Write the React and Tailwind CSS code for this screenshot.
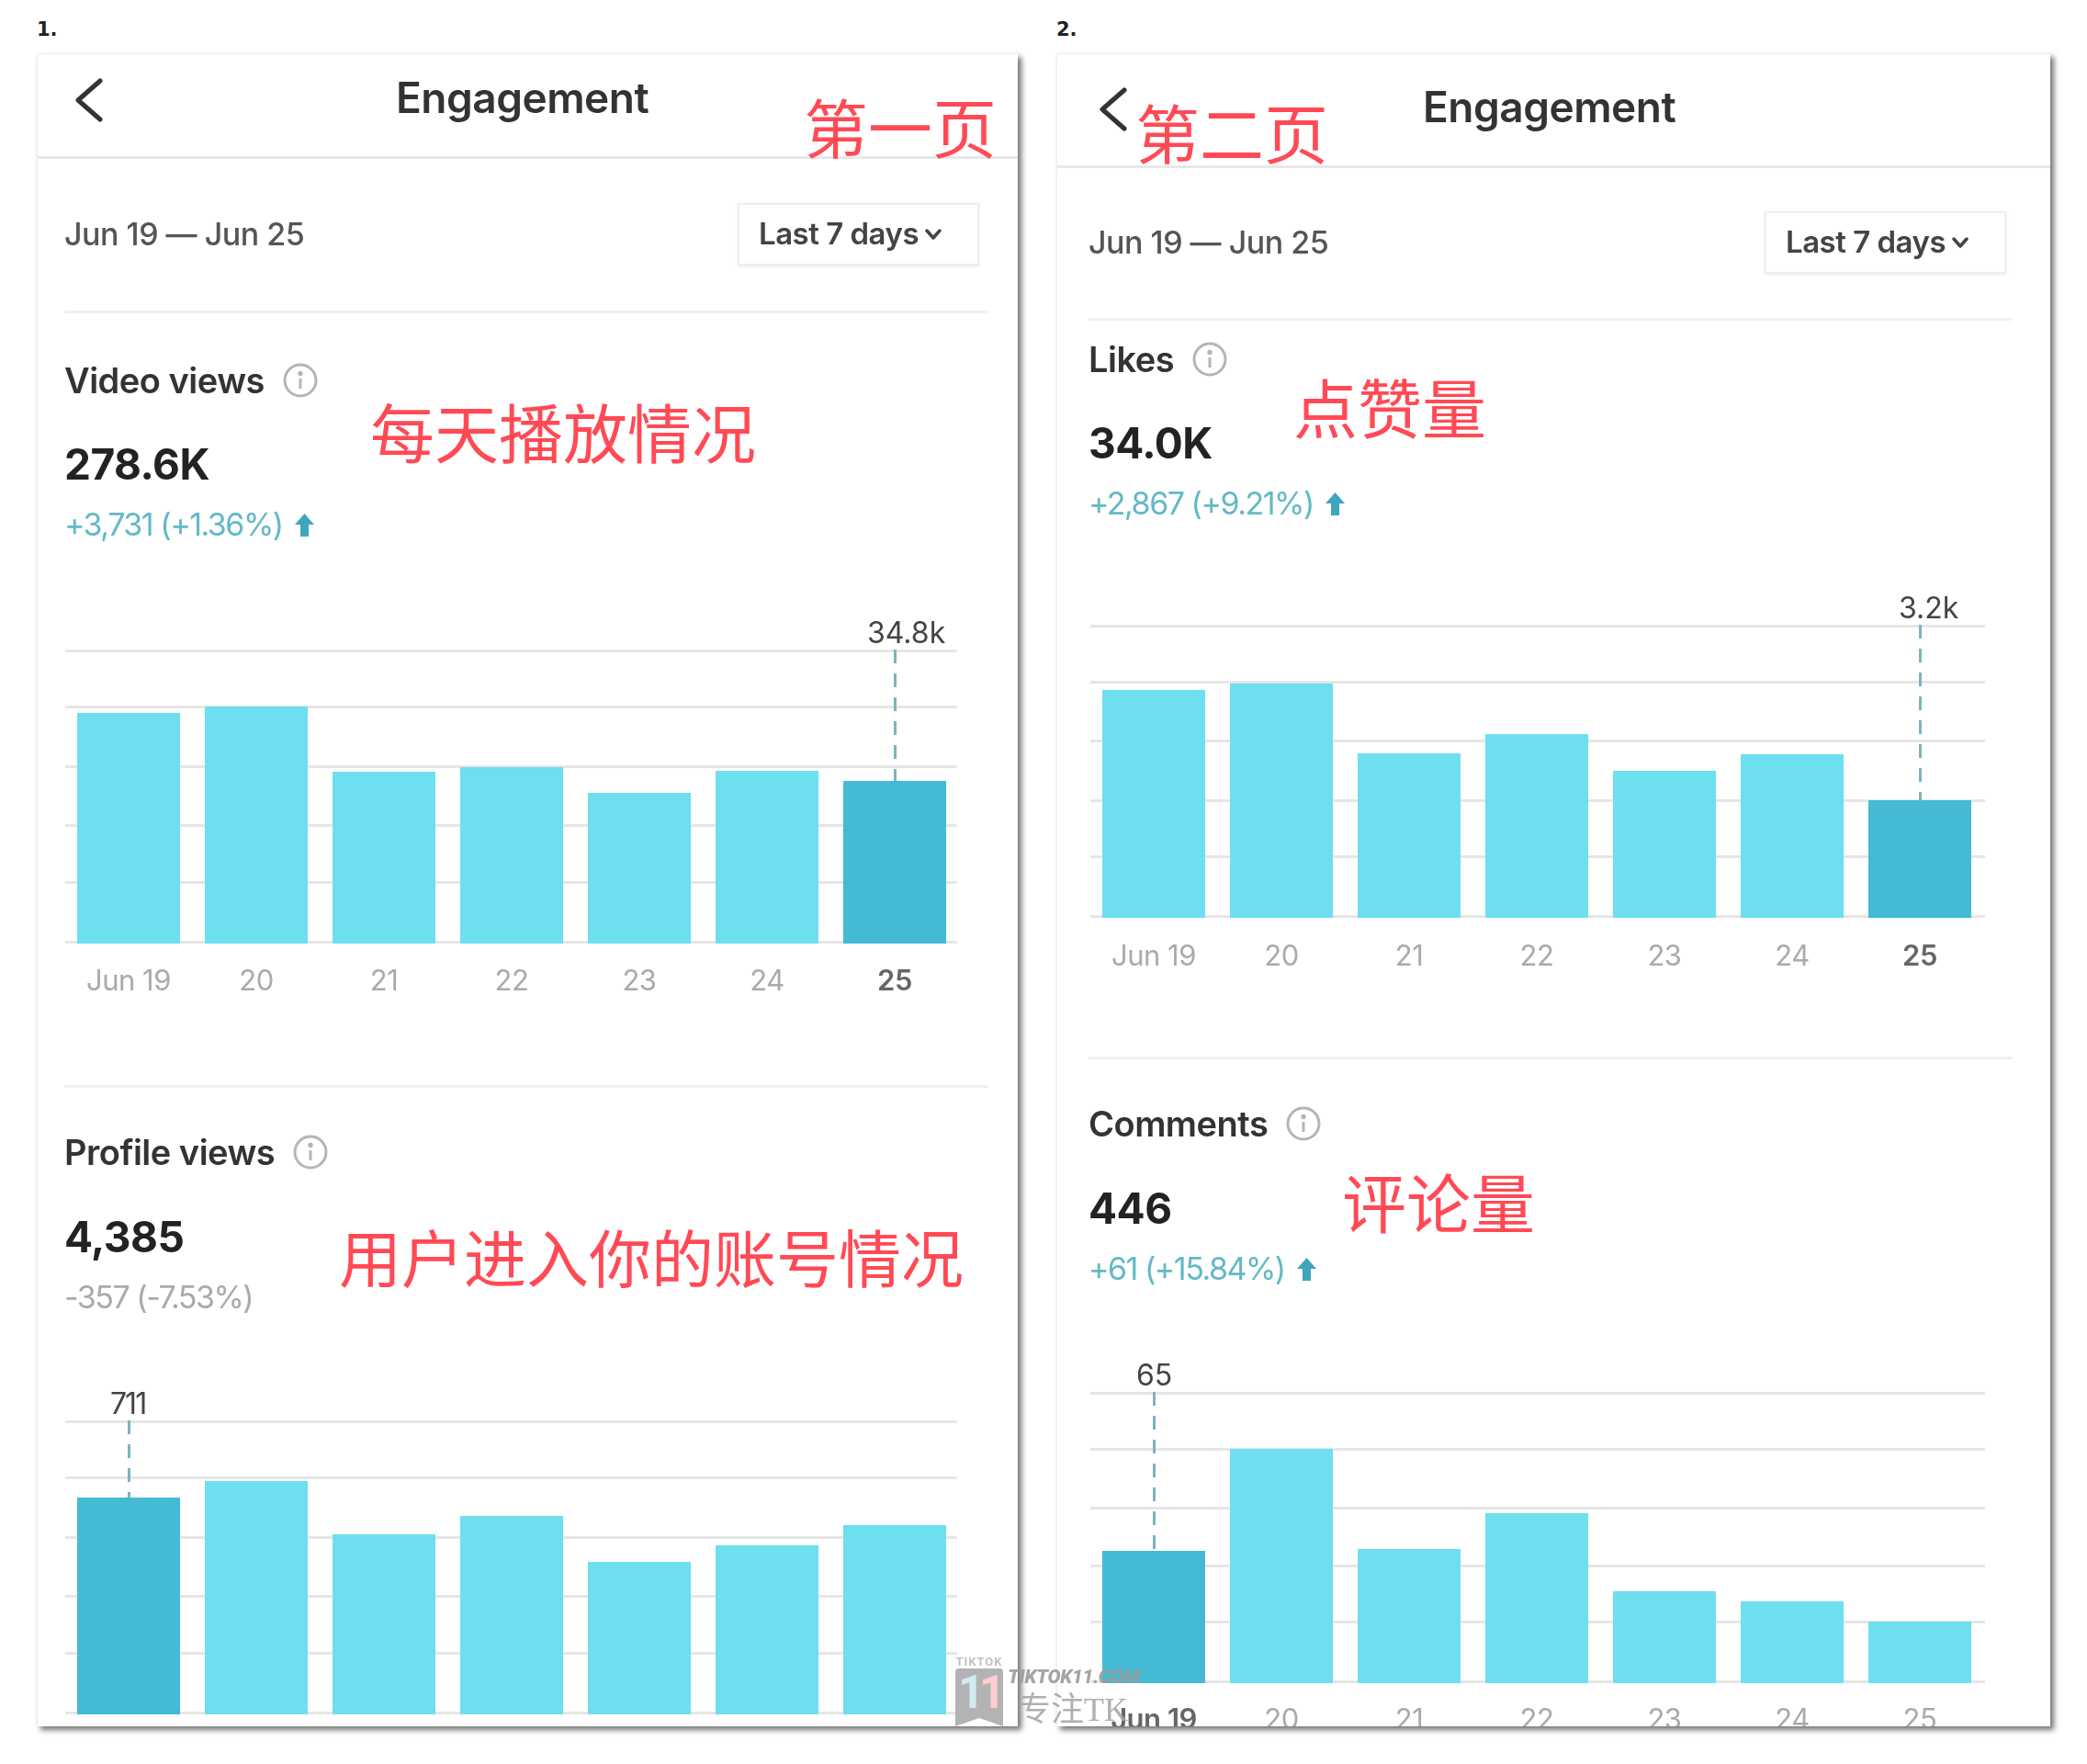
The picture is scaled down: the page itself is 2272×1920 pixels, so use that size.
import React from 'react';

const SANS = "font-['Inter',sans-serif]";
const CJK = "font-['Noto_Sans_CJK_SC',sans-serif]";
const DAYS = ['Jun 19', '20', '21', '22', '23', '24', '25'];

const BackIcon = () => (
  <svg width="34" height="48" viewBox="0 0 34 48" fill="none" stroke="#333" strokeWidth="5" strokeLinecap="round" strokeLinejoin="round">
    <path d="M29 3 L5 24 L29 45" />
  </svg>
);

const SmallChevron = () => (
  <svg width="20" height="12" viewBox="0 0 20 12" fill="none" stroke="#444" strokeWidth="3.5" strokeLinecap="round" strokeLinejoin="round">
    <path d="M3 2 L10 10 L17 2" />
  </svg>
);

const InfoIcon = () => (
  <svg width="38" height="38" viewBox="0 0 38 38" fill="none" stroke="#b5b5b5" strokeWidth="3">
    <circle cx="19" cy="19" r="17" />
    <path d="M19 17 V28" />
    <circle cx="19" cy="11.5" r="1.2" fill="#b5b5b5" />
  </svg>
);

const UpArrow = () => (
  <svg width="21" height="25" viewBox="0 0 21 25" fill="#3ea6bd">
    <path d="M10.5 0 L21 12 H15 V25 H6 V12 H0 Z" />
  </svg>
);

// one horizontal rule on the light grey side, used between sections
const Rule = ({ className }) => <div className={`h-[3px] bg-[#f0f0f0] ${className}`} />;

const Chart = ({ height, bars, active, value, labelClass, gridClass, labelGap, noLabels }) => (
  <div className={gridClass}>
    <div className="relative" style={{ height }}>
      <div className="absolute inset-0 grid grid-rows-[62fr_65fr_65fr_62fr_66fr] border-b-[3px] border-[#e6e6e6]">
        {[0, 1, 2, 3, 4].map((i) => (
          <div key={i} className="border-t-[3px] border-[#e6e6e6]" />
        ))}
      </div>
      <div className="relative flex h-full items-end gap-[27px] pl-[13px]">
        {bars.map((h, i) => (
          <div
            key={i}
            className={`relative w-[112px] ${i === active ? 'bg-[#45bad4]' : 'bg-[#6ddfef]'}`}
            style={{ height: h }}
          >
            {i === active && (
              <div
                className="absolute bottom-full left-[55px] w-[3px] bg-[repeating-linear-gradient(to_bottom,#7db3be_0_15px,transparent_15px_26px)]"
                style={{ height: height - h }}
              />
            )}
          </div>
        ))}
      </div>
      <span className={`absolute -top-[38px] text-[32px] leading-[40px] text-[#444] ${labelClass}`}>{value}</span>
    </div>
    {!noLabels && (
      <div className={`flex gap-[27px] pl-[13px] ${labelGap}`}>
        {DAYS.map((d, i) => (
          <span
            key={d}
            className={`w-[112px] whitespace-nowrap text-center text-[31px] leading-[40px] tracking-[-0.5px] ${
              i === active ? 'font-semibold text-[#666]' : 'text-[#aaa]'
            }`}
          >
            {d}
          </span>
        ))}
      </div>
    )}
  </div>
);

const Stat = ({ title, value, delta, up, className, valueGap }) => (
  <section className={className}>
    <div className="flex h-[48px] items-center gap-[20px]">
      <h2 className="text-[38px] font-semibold leading-[48px] tracking-[-0.5px] text-[#333]">{title}</h2>
      <InfoIcon />
    </div>
    <div className={`text-[46px] font-bold leading-[56px] tracking-[-0.5px] text-[#222] ${valueGap}`}>{value}</div>
    <div className="mt-[16px] flex h-[44px] items-center gap-[13px]">
      <span className={`text-[34px] leading-[44px] tracking-[-1.5px] ${up ? 'text-[#63b9c6]' : 'text-[#aaa]'}`}>{delta}</span>
      {up && <UpArrow />}
    </div>
  </section>
);

const Panel = ({ className, children }) => (
  <div className={`relative h-[1821px] overflow-hidden border-l border-t border-[#eeeeee] bg-white shadow-[4px_4px_6px_rgba(0,0,0,0.55)] ${SANS} ${className}`}>
    <div className="h-full blur-[0.7px]">{children}</div>
  </div>
);

const Note = ({ className, children }) => (
  <span className={`absolute whitespace-nowrap leading-none text-[#ff4a55] ${CJK} ${className}`}>{children}</span>
);

const TopRow = () => (
  <div className="flex items-center justify-between">
    <span className="text-[34px] font-medium leading-[44px] tracking-[-0.5px] text-[#555]">Jun 19 — Jun 25</span>
    <button className="flex h-[68px] w-[263px] items-center gap-[6px] border-2 border-[#eeeeee] pl-[21px] text-[33px] font-semibold tracking-[-0.5px] text-[#444] shadow-[0_1px_3px_rgba(0,0,0,0.1)]">
      Last 7 days
      <SmallChevron />
    </button>
  </div>
);

const Watermark = () => (
  <div className="absolute left-[1040px] top-[1802px] flex gap-[5px] opacity-90">
    <div className="flex w-[52px] flex-col items-center">
      <span className="text-[13px] font-bold leading-[13px] tracking-[1px] text-[#bbb] font-['Roboto',sans-serif]">TIKTOK</span>
      <div className="relative">
        <svg width="52" height="63" viewBox="0 0 52 63" fill="#ababab" className="mt-[1px]">
          <path d="M4 0 H48 Q52 0 52 4 V63 L26 54 L0 63 V4 Q0 0 4 0 Z" />
        </svg>
        <span className="absolute left-[3px] top-[2px] text-[50px] font-bold leading-[50px] tracking-[-2px] text-[#cdeaf0] font-['Roboto',sans-serif]">1</span>
        <span className="absolute left-[26px] top-[2px] text-[50px] font-bold leading-[50px] text-[#ffc8c8] font-['Roboto',sans-serif]">1</span>
      </div>
    </div>
    <div className="pt-[11px]">
      <div className="whitespace-nowrap text-[21px] font-black italic leading-[24px] tracking-[-0.3px] text-[#9c9c9c] font-['Roboto',sans-serif]">TIKTOK11.COM</div>
      <div className="ml-[11px] mt-[5px] whitespace-nowrap text-[36px] leading-[38px] text-[#a8a8a8] font-['Liberation_Serif','Noto_Sans_CJK_SC',serif]">专注TK</div>
    </div>
  </div>
);

export default function App() {
  return (
    <div className="relative flex h-[1920px] w-[2272px] bg-white">
      <div className="ml-[40px] w-[1068px]">
        <div className="h-[58px] pt-[18px] text-[21px] font-bold leading-[28px] text-[#222] font-['DejaVu_Sans',sans-serif]">1.</div>
        <Panel>
          <header className="flex h-[114px] items-center border-b-[3px] border-[#e8e8e8] pb-[12px] pl-[39px]">
            <BackIcon />
            <h1 className="mb-[6px] ml-[317px] text-[46px] font-semibold leading-[56px] tracking-[-0.5px] text-[#333]">Engagement</h1>
          </header>
          <div className="mb-[49px] ml-[29px] mr-[42px] mt-[48px]">
            <TopRow />
          </div>
          <Rule className="ml-[29px] mr-[33px]" />
          <Stat className="ml-[29px] mt-[49px]" valueGap="mt-[39px]" title="Video views" value="278.6K" delta="+3,731 (+1.36%)" up />
          <Chart
            gridClass="ml-[30px] mt-[114px] w-[971px]"
            labelGap="mt-[20px]"
            height={320}
            bars={[251, 258, 187, 192, 164, 188, 177]}
            active={6}
            value="34.8k"
            labelClass="left-[873px]"
          />
          <Rule className="ml-[29px] mr-[33px] mt-[94px]" />
          <Stat className="ml-[29px] mt-[46px]" valueGap="mt-[40px]" title="Profile views" value="4,385" delta="-357 (-7.53%)" />
          <Chart
            noLabels
            gridClass="ml-[30px] mt-[112px] w-[971px]"
            height={320}
            bars={[236, 254, 196, 216, 166, 184, 206]}
            active={0}
            value="711"
            labelClass="left-[49px] tracking-[-2px]"
          />
          <Note className="left-[834px] top-[43px] text-[70px]">第一页</Note>
          <Note className="left-[362px] top-[375px] text-[70px]">每天播放情况</Note>
          <Note className="left-[328px] top-[1274px] text-[68px]">用户进入你的账号情况</Note>
        </Panel>
      </div>

      <div className="ml-[42px] w-[1082px]">
        <div className="h-[58px] pt-[18px] text-[21px] font-bold leading-[28px] text-[#222] font-['DejaVu_Sans',sans-serif]">2.</div>
        <Panel>
          <header className="flex h-[124px] items-center border-b-[3px] border-[#e8e8e8] pb-[2px] pl-[44px]">
            <BackIcon />
            <h1 className="mb-[6px] ml-[320px] text-[46px] font-semibold leading-[56px] tracking-[-0.5px] text-[#333]">Engagement</h1>
          </header>
          <div className="mb-[48px] ml-[34px] mr-[48px] mt-[47px]">
            <TopRow />
          </div>
          <Rule className="ml-[34px] mr-[42px]" />
          <Stat className="ml-[34px] mt-[18px]" valueGap="mt-[39px]" title="Likes" value="34.0K" delta="+2,867 (+9.21%)" up />
          <Chart
            gridClass="ml-[36px] mt-[110px] w-[974px]"
            labelGap="mt-[21px]"
            height={319}
            bars={[248, 255, 179, 200, 160, 178, 128]}
            active={6}
            value="3.2k"
            labelClass="left-[880px]"
          />
          <Rule className="ml-[34px] mr-[42px] mt-[90px]" />
          <Stat className="ml-[34px] mt-[46px]" valueGap="mt-[40px]" title="Comments" value="446" delta="+61 (+15.84%)" up />
          <Chart
            gridClass="ml-[36px] mt-[112px] w-[974px]"
            labelGap="mt-[19px]"
            height={317}
            bars={[144, 255, 146, 185, 100, 89, 67]}
            active={0}
            value="65"
            labelClass="left-[50px]"
          />
          <Note className="left-[85px] top-[49px] text-[70px]">第二页</Note>
          <Note className="left-[257px] top-[348px] text-[70px]">点赞量</Note>
          <Note className="left-[310px] top-[1213px] text-[70px]">评论量</Note>
        </Panel>
      </div>

      <Watermark />
    </div>
  );
}
